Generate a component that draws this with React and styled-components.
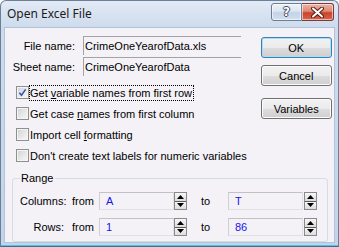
import React from 'react';
import styled, { createGlobalStyle } from 'styled-components';

const GlobalStyle = createGlobalStyle`
  * { box-sizing: border-box; }
  body {
    margin: 0;
    background: #ffffff;
    font-family: "Liberation Sans", Arial, sans-serif;
    font-size: 11px;
    color: #000;
  }
`;

const Window = styled.div`
  width: 339px;
  height: 247px;
  display: flex;
  flex-direction: column;
  border: 1px solid #6b7f99;
  border-bottom-color: #3f6f95;
  border-radius: 6px 6px 0 0;
  background: linear-gradient(#e2eaf5, #cddbed 27px, #c3d4ea);
  padding: 0 3px 3px 3px;
  box-shadow: inset 0 -1px 0 #4fc3e6;
`;

const TitleBar = styled.div`
  height: 26px;
  display: flex;
  align-items: center;
  padding-left: 3px;
`;

const Title = styled.span`
  font-family: "Noto Sans", "Open Sans", sans-serif;
  font-size: 12px;
  color: #1b1b1b;
  flex: 1;
  margin-top: -1px;
`;

const Caption = styled.div`
  align-self: flex-start;
  margin-top: 2px;
  margin-right: 1px;
  display: flex;
`;

const CapButton = styled.div`
  width: ${p => (p.$close ? 32 : 31)}px;
  height: 18px;
  display: flex;
  align-items: center;
  justify-content: center;
  border: 1px solid ${p => (p.$close ? '#7a3c36' : '#6c7d96')};
  border-left-width: ${p => (p.$close ? 0 : 1)}px;
  border-radius: ${p => (p.$close ? '0 3px 3px 0' : '3px 0 0 3px')};
  background: ${p =>
    p.$close
      ? 'linear-gradient(#eeb2a4, #de8a76 45%, #c8432a 55%, #d8654a)'
      : 'linear-gradient(#eef2f8, #dce5f1 45%, #c3d2e6 55%, #d4e0ef)'};
  box-shadow: inset 0 0 0 1px rgba(255, 255, 255, 0.55);
`;

const Help = styled.span`
  font-family: "DejaVu Sans", sans-serif;
  font-weight: bold;
  font-size: 12px;
  color: #ffffff;
  text-shadow: 1px 0 0 #3d4b5f, -1px 0 0 #3d4b5f, 0 1px 0 #3d4b5f, 0 -1px 0 #3d4b5f;
`;

const Client = styled.div`
  flex: 1;
  display: flex;
  flex-direction: column;
  background: #f4f2f7;
  border: 1px solid #b4c4d8;
`;

const Top = styled.div`
  display: flex;
  padding: 8px 0 0 7px;
`;

const LeftCol = styled.div`
  display: flex;
  flex-direction: column;
`;

const FieldGrid = styled.div`
  display: grid;
  grid-template-columns: 63px 158px;
  column-gap: 8px;
  row-gap: 2px;
  align-items: center;
`;

const FieldLabel = styled.span`
  text-align: right;
  white-space: nowrap;
`;

const TextBox = styled.div`
  height: 19px;
  display: flex;
  align-items: center;
  padding-left: 1px;
  border-top: 1px solid #a3a3a3;
  border-left: 1px solid #a3a3a3;
  white-space: nowrap;
  overflow: hidden;
`;

const Checks = styled.div`
  margin-top: 6px;
  padding-left: 4px;
  display: flex;
  flex-direction: column;
`;

const CheckRow = styled.div`
  height: 21px;
  display: flex;
  align-items: center;
  white-space: nowrap;
`;

const Box = styled.span`
  width: 13px;
  height: 13px;
  display: flex;
  align-items: center;
  justify-content: center;
  border: 1px solid #8e8f8f;
  background: linear-gradient(135deg, #cfd2d6, #eeeeee 70%, #f6f6f6);
  box-shadow: inset 0 0 0 1px #f4f4f4;
`;

const CheckLabel = styled.span`
  padding: 1px 1px 1px 0;
  border: 1px dotted ${p => (p.$focus ? '#000' : 'transparent')};
`;

const Buttons = styled.div`
  margin-left: 12px;
  padding-top: 1px;
  display: flex;
  flex-direction: column;
`;

const Button = styled.div`
  width: 71px;
  height: 21px;
  margin-top: ${p => p.$gap || 0}px;
  display: flex;
  align-items: center;
  justify-content: center;
  border: 1px solid ${p => (p.$default ? '#3c7fb1' : '#707070')};
  border-radius: 3px;
  background: linear-gradient(#f2f2f2, #ebebeb 50%, #dddddd 51%, #cfcfcf);
  box-shadow: inset 0 0 0 1px ${p => (p.$default ? '#a9dff5' : '#fbfbfb')};
`;

const Group = styled.fieldset`
  margin: 6px 6px 0 7px;
  padding: 0 6px 5px 7px;
  border: 1px solid #d5dde3;
  border-radius: 3px;
  min-width: 0;
`;

const Legend = styled.legend`
  padding: 0 2px 0 1px;
  line-height: 13px;
`;

const RangeRows = styled.div`
  padding-top: 7px;
  display: flex;
  flex-direction: column;
  gap: 8px;
`;

const RangeRow = styled.div`
  display: flex;
  align-items: center;
  height: 18px;
`;

const Cell = styled.span`
  width: ${p => p.$w}px;
  margin-left: ${p => p.$ml || 0}px;
  text-align: ${p => p.$align || 'left'};
  white-space: nowrap;
`;

const RangeBox = styled.div`
  width: 75px;
  height: 18px;
  display: flex;
  align-items: center;
  padding-left: 6px;
  border: 1px solid #e1e1e4;
  border-top-color: #c2c2c4;
  border-left-color: #d0d0d2;
  color: #1414f0;
`;

const Spin = styled.div`
  width: 13px;
  height: 18px;
  margin-left: ${p => p.$ml || 0}px;
  display: flex;
  flex-direction: column;
  border: 1px solid #8a8a8a;
  background: #5a5a5a;
  gap: 1px;
`;

const SpinHalf = styled.div`
  flex: 1;
  display: flex;
  align-items: center;
  justify-content: center;
  background: linear-gradient(#f7f7f7, #dcdcdc);
`;

const Tri = ({ down }) => (
  <svg width="7" height="4" viewBox="0 0 7 4">
    <polygon points={down ? '0,0 7,0 3.5,4' : '3.5,0 7,4 0,4'} fill="#000" />
  </svg>
);

const Spinner = ({ ml }) => (
  <Spin $ml={ml}>
    <SpinHalf>
      <Tri />
    </SpinHalf>
    <SpinHalf>
      <Tri down />
    </SpinHalf>
  </Spin>
);

const Check = ({ checked, focus, children }) => (
  <CheckRow>
    <Box>
      {checked && (
        <svg width="9" height="9" viewBox="0 0 9 9">
          <path d="M1.4 4.8 L3.5 7.2 L7.6 1.4" fill="none" stroke="#3152b0" strokeWidth="1.5" />
        </svg>
      )}
    </Box>
    <CheckLabel $focus={focus}>{children}</CheckLabel>
  </CheckRow>
);

export default function App() {
  return (
    <>
      <GlobalStyle />
      <Window>
        <TitleBar>
          <Title>Open Excel File</Title>
          <Caption>
            <CapButton>
              <Help>?</Help>
            </CapButton>
            <CapButton $close>
              <svg width="13" height="11" viewBox="0 0 13 11">
                <path d="M2 1.5 L11 9.5 M11 1.5 L2 9.5" stroke="#5a1d16" strokeWidth="4" strokeLinecap="round" />
                <path d="M2 1.5 L11 9.5 M11 1.5 L2 9.5" stroke="#ffffff" strokeWidth="2" strokeLinecap="round" />
              </svg>
            </CapButton>
          </Caption>
        </TitleBar>
        <Client>
          <Top>
            <LeftCol>
              <FieldGrid>
                <FieldLabel>File name:</FieldLabel>
                <TextBox>CrimeOneYearofData.xls</TextBox>
                <FieldLabel>Sheet name:</FieldLabel>
                <TextBox>CrimeOneYearofData</TextBox>
              </FieldGrid>
              <Checks>
                <Check checked focus>
                  Get <u>v</u>ariable names from first row
                </Check>
                <Check>
                  Get case <u>n</u>ames from first column
                </Check>
                <Check>
                  Import cell <u>f</u>ormatting
                </Check>
                <Check>Don't create text labels for numeric variables</Check>
              </Checks>
            </LeftCol>
            <Buttons>
              <Button $default>OK</Button>
              <Button $gap={7}>Cancel</Button>
              <Button $gap={12}>Variables</Button>
            </Buttons>
          </Top>
          <Group>
            <Legend>Range</Legend>
            <RangeRows>
              <RangeRow>
                <Cell $w={44} $align="right">Columns:</Cell>
                <Cell $w={27} $ml={8}>from</Cell>
                <RangeBox>A</RangeBox>
                <Spinner />
                <Cell $w={27} $ml={14}>to</Cell>
                <RangeBox>T</RangeBox>
                <Spinner ml={1} />
              </RangeRow>
              <RangeRow>
                <Cell $w={44} $align="right">Rows:</Cell>
                <Cell $w={27} $ml={8}>from</Cell>
                <RangeBox>1</RangeBox>
                <Spinner />
                <Cell $w={27} $ml={14}>to</Cell>
                <RangeBox>86</RangeBox>
                <Spinner ml={1} />
              </RangeRow>
            </RangeRows>
          </Group>
        </Client>
      </Window>
    </>
  );
}
